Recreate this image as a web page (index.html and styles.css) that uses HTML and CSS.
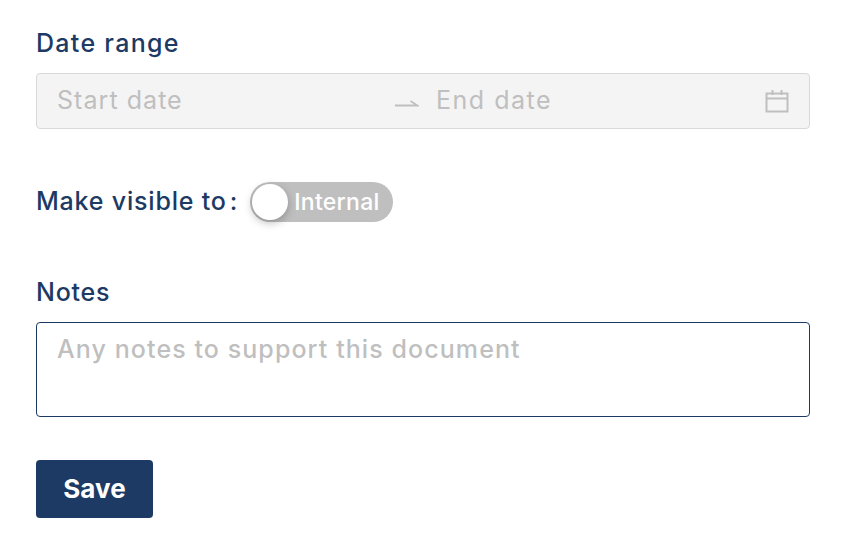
FILE: index.html
```html
<!DOCTYPE html>
<html lang="en">
<head>
    <meta charset="UTF-8">
    <meta name="viewport" content="width=device-width, initial-scale=1.0">
    <title>Document details</title>
    <link rel="stylesheet" href="styles.css">
</head>
<body>
    <form class="doc-form">
        <div class="field-label date-label">Date range</div>
        <div class="date-range">
            <span class="date-part start-part">Start date</span>
            <svg class="range-arrow" width="24" height="10" viewBox="0 0 24 10">
                <path d="M0 8.5H22.5L15.5 4" fill="none" stroke="#bfbfbf" stroke-width="1.8"/>
            </svg>
            <span class="date-part end-part">End date</span>
            <svg class="calendar-icon" width="24" height="24" viewBox="0 0 24 24">
                <path d="M1.5 4.5H22.5V22.5H1.5ZM1.5 9.5H22.5M7.5 1V6M16.5 1V6" fill="none" stroke="#bfbfbf" stroke-width="2"/>
            </svg>
        </div>

        <div class="visible-row">
            <span class="field-label make-label">Make visible to</span>
            <span class="field-label colon">:</span>
            <div class="switch">
                <span class="switch-handle"></span>
                <span class="switch-text">Internal</span>
            </div>
        </div>

        <div class="field-label notes-label">Notes</div>
        <div class="notes-box">Any notes to support this document</div>

        <button type="button" class="save-btn">Save</button>
    </form>
</body>
</html>
```

FILE: styles.css
```css
body {
    margin: 0;
    background-color: #fff;
    font-family: Inter, "Liberation Sans", sans-serif;
}

.doc-form {
    padding: 28px 36px 0;
}

.field-label {
    color: #1c3a63;
    font-size: 25px;
    font-weight: 500;
    line-height: 30px;
}

.date-label {
    letter-spacing: 1.3px;
}

.date-range {
    display: flex;
    align-items: center;
    box-sizing: border-box;
    height: 56px;
    margin-top: 15px;
    padding: 0 20px 2px;
    background-color: #f4f4f4;
    border: 1px solid #d9d9d9;
    border-radius: 4px;
}

.date-part {
    color: #bfbfbf;
    font-size: 25px;
}

.start-part {
    width: 338px;
    letter-spacing: 1.05px;
}

.range-arrow {
    margin-top: 4px;
}

.end-part {
    margin-left: 17px;
    letter-spacing: 1.5px;
}

.calendar-icon {
    margin-top: 2px;
    margin-left: auto;
}

.visible-row {
    display: flex;
    align-items: center;
    margin-top: 53px;
}

.make-label {
    margin-bottom: 2px;
    letter-spacing: 0.8px;
}

.colon {
    margin-bottom: 2px;
    margin-left: 3px;
    width: 20px;
}

.switch {
    display: flex;
    align-items: center;
    box-sizing: border-box;
    width: 143px;
    height: 40px;
    padding: 0 13px 0 2px;
    background-color: #bfbfbf;
    border-radius: 20px;
}

.switch-handle {
    width: 36px;
    height: 36px;
    background-color: #fff;
    border-radius: 50%;
    box-shadow: 0 3px 8px rgba(0, 0, 0, 0.25);
}

.switch-text {
    margin-left: auto;
    color: #fff;
    font-size: 23px;
    font-weight: 500;
    letter-spacing: 0.3px;
}

.notes-label {
    margin-top: 55px;
    letter-spacing: 0.75px;
}

.notes-box {
    box-sizing: border-box;
    height: 95px;
    margin-top: 15px;
    padding: 10px 20px;
    color: #bfbfbf;
    font-size: 25px;
    font-weight: 500;
    line-height: 32px;
    letter-spacing: 1.08px;
    border: 1px solid #1c3a63;
    border-radius: 4px;
}

.save-btn {
    display: block;
    width: 117px;
    height: 58px;
    margin-top: 43px;
    padding: 0 0 2px;
    color: #fff;
    background-color: #1c3a63;
    border: 0;
    border-radius: 4px;
    box-shadow: 0 2px 2px rgba(0, 0, 0, 0.05);
    font-family: inherit;
    font-size: 26px;
    font-weight: 700;
}
```
